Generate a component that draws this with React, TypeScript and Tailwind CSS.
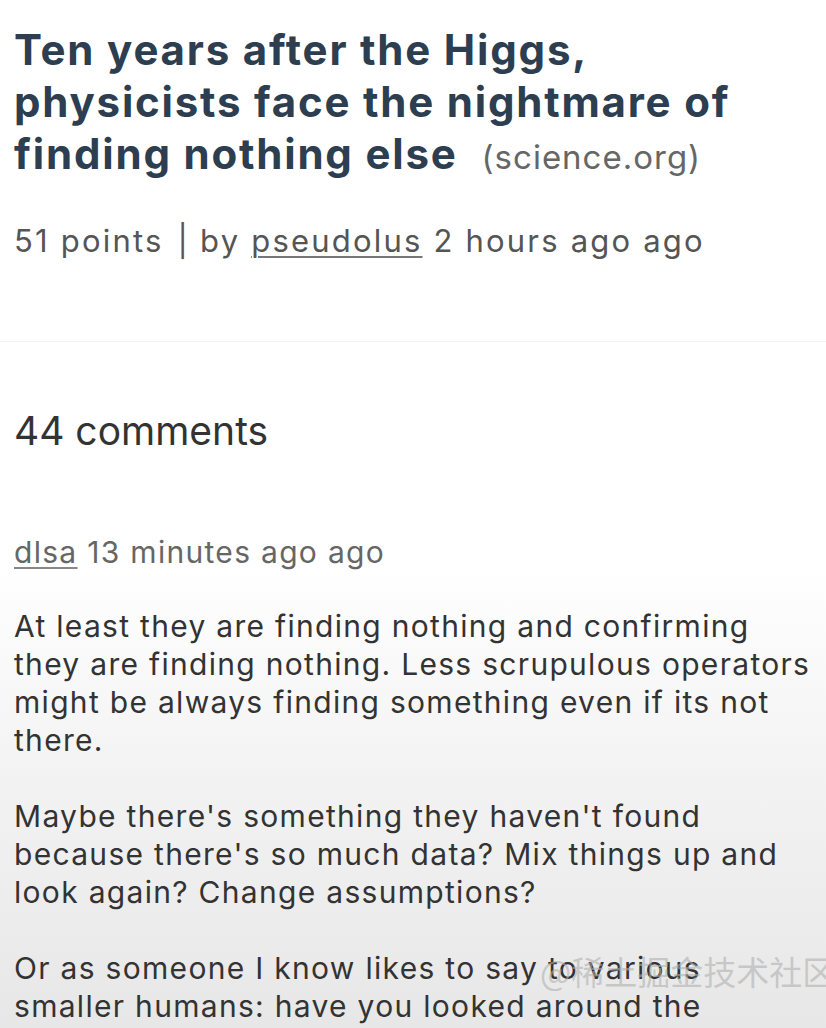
export default function App() {
  return (
    <div className="relative min-h-[1028px] overflow-hidden bg-[linear-gradient(to_bottom,#ffffff_0%,#ffffff_55%,#f3f3f3_75%,#e7e7e7_100%)] font-['Inter',Arial,sans-serif]">
      <div className="border-b border-[#f2f2f2] pb-[80px] pl-[14px] pr-[10px] pt-[24px]">
        <h1 className="max-w-[770px] text-[42px] font-bold leading-[52px] tracking-[1.8px] text-[#2c3e50]">
          Ten years after the Higgs, physicists face the nightmare of finding
          nothing else
          <span className="ml-[24px] text-[33px] font-normal tracking-[1px] text-[#666]">
            (science.org)
          </span>
        </h1>
        <p className="mt-[38px] text-[31px] leading-[40px] tracking-[2.2px] text-[#555]">
          51 points
          <span className="ml-[14px] mr-[10px]">|</span>
          by{" "}
          <a className="underline decoration-[#777] decoration-2 underline-offset-4" href="#">
            pseudolus
          </a>{" "}
          2 hours ago ago
        </p>
      </div>

      <div className="pl-[14px] pr-[10px]">
        <h2 className="mt-[67px] text-[39px] leading-[44px] text-[#333]">
          44 comments
        </h2>

        <div className="mt-[79px]">
          <p className="text-[30px] leading-[40px] tracking-[1.3px] text-[#666]">
            <a className="underline decoration-[#888] decoration-2 underline-offset-4" href="#">
              dlsa
            </a>{" "}
            13 minutes ago ago
          </p>
          <div className="mt-[35px] space-y-[38px] text-[30px] leading-[38px] tracking-[1.3px] text-[#333]">
            <p>
              At least they are finding nothing and confirming they are finding
              nothing. Less scrupulous operators might be always finding
              something even if its not there.
            </p>
            <p>
              Maybe there's something they haven't found because there's so
              much data? Mix things up and look again? Change assumptions?
            </p>
            <p>
              Or as someone I know likes to say to various smaller humans: have
              you looked around the
            </p>
          </div>
        </div>
      </div>

      <div className="pointer-events-none absolute left-[540px] top-[951px] whitespace-nowrap font-['Noto_Sans_CJK_SC',sans-serif] text-[33px] leading-[40px] text-[#b0b0b0]/60">
        @稀土掘金技术社区
      </div>
    </div>
  );
}
